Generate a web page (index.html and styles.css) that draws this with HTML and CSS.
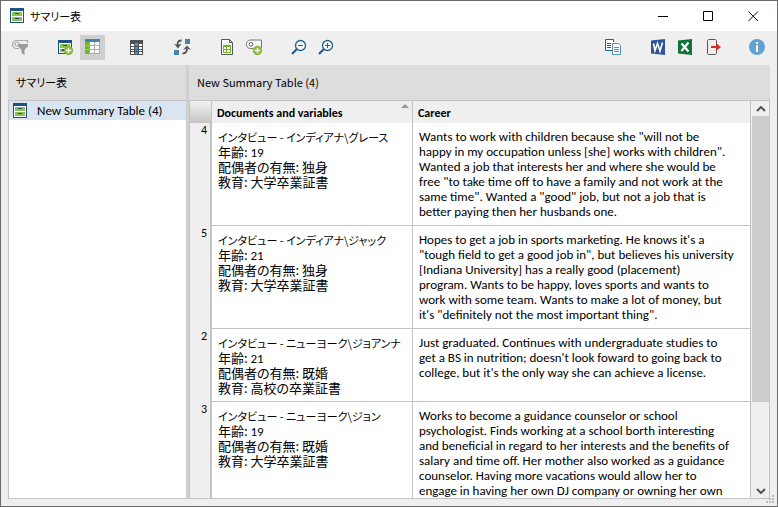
FILE: index.html
```html
<!DOCTYPE html>
<html lang="ja">
<head>
<meta charset="utf-8">
<title>サマリー表</title>
<link rel="stylesheet" href="styles.css">
</head>
<body>
<svg class="defs" aria-hidden="true">
  <symbol id="cabinet" viewBox="0 0 16 16">
    <path fill="#fff" d="M1 2h14v13H1z"/>
    <path fill="#1c5180" d="M1 0h14v3H1zM1 3h1v12H1zM14 3h1v12h-1zM1 14h14v1H1z"/>
    <path fill="#8fbf52" d="M3 4h10v4H3zM3 9h10v4H3z"/>
    <path fill="#1c5180" d="M6 5h4v1H6zM6 10h4v1H6z"/>
  </symbol>
</svg>
<div class="window">
  <header class="titlebar">
    <svg class="app-icon" aria-hidden="true"><use href="#cabinet"/></svg>
    <h1 class="caption">サマリー表</h1>
    <div class="controls">
      <button type="button" aria-label="最小化"><svg viewBox="0 0 11 11"><path d="M0 5.500h10"/></svg></button>
      <button type="button" aria-label="最大化"><svg viewBox="0 0 11 11"><path d="M.5.5h9v9h-9z"/></svg></button>
      <button type="button" aria-label="閉じる"><svg viewBox="0 0 11 11"><path d="M.5.5l9.500 9.500M10 .5l-9.500 9.500"/></svg></button>
    </div>
  </header>

  <div class="toolbar" role="toolbar">
    <div class="group">
      <button type="button" aria-label="フィルター"><svg viewBox="0 0 25 25"><path fill="none" stroke="#aaa" stroke-width="1.200" d="M19.500 8V5.500H8.500a4 4 0 0 0 0 8H11M12 11H9a2 2 0 1 1 2-2"/><path fill="#999" d="M10 9h10v2l-3.500 4v5l-3-2v-3L10 11z"/></svg></button>
    </div>
    <div class="group">
      <button type="button" aria-label="新規サマリー表"><svg viewBox="0 0 25 25"><path fill="#fff" d="M5 6h14v13H5z"/><path fill="#1c5180" d="M5 5h14v3H5zM5 8h1v11H5zM18 8h1v5h-1zM5 18h8v1H5z"/><path fill="#8fbf52" d="M7 9h10v4H7zM7 14h7v3H7z"/><path fill="#1c5180" d="M10 10h4v1h-4zM9 14h3v2H9z"/><circle cx="15.500" cy="15.500" r="4.700" fill="#8ab63a"/><path stroke="#fff" stroke-width="1.400" d="M12.700 15.500h5.600M15.500 12.700v5.600"/></svg></button>
      <button type="button" class="active" aria-label="一覧を表示" aria-pressed="true"><svg viewBox="0 0 25 25"><path fill="#aaa" d="M5 4h15v15H5z"/><path fill="#4682b0" d="M5 4h15v3H5z"/><path fill="#72b626" d="M5 7h4v12H5z"/><path fill="#fff" d="M10 7h4v3h-4zM15 7h4v3h-4zM10 11h4v3h-4zM15 11h4v3h-4zM10 15h4v3h-4zM15 15h4v3h-4z"/><path stroke="#94c95e" d="M5 10.500h4M5 14.500h4"/></svg></button>
    </div>
    <div class="group">
      <button type="button" aria-label="列"><svg viewBox="0 0 25 25"><path fill="#505050" d="M5 5h13v15H5z"/><path fill="#fff" d="M6 9h3v2H6zM6 12h3v2H6zM6 15h3v1H6zM6 17h3v2H6zM14 9h3v2h-3zM14 12h3v2h-3zM14 15h3v1h-3zM14 17h3v2h-3z"/><path fill="#4f91c5" d="M10 8h3v3h-3zM10 12h3v2h-3zM10 15h3v1h-3zM10 17h3v2h-3z"/></svg></button>
    </div>
    <div class="group">
      <button type="button" aria-label="行と列を入れ替え"><svg viewBox="0 0 25 25"><path fill="#4682b0" d="M15 4h5v5h-5zM4 15h5v5H4z"/><path fill="none" stroke="#505050" stroke-width="1.800" d="M11.500 5.500C8 5.500 7.500 7 7.500 10M12.500 18.500c3.500 0 4.500-1.500 4.500-5"/><path fill="#505050" d="M4 8.500l3.500 1.500 4-1.500-3.500 5zM13 15l4-4.500 4 4.500-4-1.500z"/></svg></button>
    </div>
    <div class="group">
      <button type="button" aria-label="シートとして表示"><svg viewBox="0 0 25 25"><path fill="#fff" stroke="#555" d="M6.500 4.500h8l3 3v12h-11z"/><path fill="none" stroke="#555" d="M14.500 4.500v3h3"/><path fill="#72b626" d="M8 10h8v8H8z"/><path fill="#fff" d="M9 12h2v2H9zM12 12h3v2h-3zM9 15h2v2H9zM12 15h3v2h-3z"/></svg></button>
      <button type="button" aria-label="コードを追加"><svg viewBox="0 0 25 25"><path fill="#f5f5f5" stroke="#777" d="M11 13.500H8.500a4 4 0 0 1 0-8.500h11v8"/><circle cx="9" cy="9.300" r="1.800" fill="#fff" stroke="#666"/><circle cx="15.500" cy="15.500" r="4.700" fill="#8ab63a"/><path stroke="#fff" stroke-width="1.400" d="M12.700 15.500h5.600M15.500 12.700v5.600"/></svg></button>
    </div>
    <div class="group">
      <button type="button" aria-label="縮小"><svg viewBox="0 0 25 25"><circle cx="13.500" cy="10.500" r="5" fill="#f6f9fc" stroke="#245d8f" stroke-width="1.300"/><path stroke="#245d8f" stroke-width="2.200" d="M9.700 14.300L5 19"/><path stroke="#245d8f" d="M11 10.500h5"/></svg></button>
      <button type="button" aria-label="拡大"><svg viewBox="0 0 25 25"><circle cx="13.500" cy="10.500" r="5" fill="#f6f9fc" stroke="#245d8f" stroke-width="1.300"/><path stroke="#245d8f" stroke-width="2.200" d="M9.700 14.300L5 19"/><path stroke="#245d8f" d="M11 10.500h5M13.500 8v5"/></svg></button>
    </div>
    <div class="group push">
      <button type="button" aria-label="コピー"><svg viewBox="0 0 25 25"><path fill="#fff" stroke="#245d8f" d="M12 15.500H4.500v-11h8V7"/><path stroke="#245d8f" d="M6 8.500h4M6 10.500h4M6 12.500h4"/><path fill="#fff" stroke="#4f91c5" d="M11.500 8.500h6l2 2v9h-8z"/><path stroke="#4f91c5" d="M13 12.500h5M13 14.500h5M13 16.500h5"/></svg></button>
    </div>
    <div class="group">
      <button type="button" aria-label="Word でエクスポート"><svg viewBox="0 0 25 25"><path fill="#2b579a" d="M5 5.500L19 4v16L5 18.500z"/><path fill="none" stroke="#fff" stroke-width="1.600" d="M7.500 8.500l1.500 7 2.500-7 2.500 7.500 2.500-8.500"/></svg></button>
      <button type="button" aria-label="Excel でエクスポート"><svg viewBox="0 0 25 25"><path fill="#107338" d="M5 5.500L19 4v16L5 18.500z"/><path fill="none" stroke="#fff" stroke-width="2.200" d="M8.500 8.500l7 8M15.500 7.500l-7 8.500"/></svg></button>
      <button type="button" aria-label="エクスポート"><svg viewBox="0 0 25 25"><path fill="none" stroke="#555" d="M16.500 9V5.500l-1-1h-7l-1 1v13l1 1h7l1-1V15"/><path fill="#d32f24" d="M11 11h5V8l5 4-5 4v-3h-5z"/></svg></button>
    </div>
    <div class="group">
      <button type="button" aria-label="情報"><svg viewBox="0 0 25 25"><circle cx="12" cy="12" r="8" fill="#64a1d3"/><path fill="#fff" d="M11 7h2v2h-2zM11 10h2v7h-2z"/></svg></button>
    </div>
  </div>

  <main class="panes">
    <section class="sidebar">
      <h2 class="pane-title">サマリー表</h2>
      <ul class="list">
        <li><a href="#table"><svg class="list-icon" aria-hidden="true"><use href="#cabinet"/></svg>New Summary Table (4)</a></li>
      </ul>
    </section>
    <section class="content">
      <h2 class="pane-title">New Summary Table (4)</h2>
      <div class="viewport">
        <div class="scroller">
          <table id="table">
            <thead>
              <tr><td class="corner"></td><th scope="col" class="doc sorted">Documents and variables</th><th scope="col">Career</th></tr>
            </thead>
            <tbody>
              <tr><th scope="row">4</th>
                <td class="ja"><span class="name">インタビュー - インディアナ\グレース</span><br>年齢: <b>19</b><br>配偶者の有無: 独身<br>教育: 大学卒業証書</td>
                <td>Wants to work with children because she "will not be<br>happy in my occupation unless [she] works with children".<br>Wanted a job that interests her and where she would be<br>free "to take time off to have a family and not work at the<br>same time". Wanted a "good" job, but not a job that is<br>better paying then her husbands one.</td></tr>
              <tr><th scope="row">5</th>
                <td class="ja"><span class="name">インタビュー - インディアナ\ジャック</span><br>年齢: <b>21</b><br>配偶者の有無: 独身<br>教育: 大学卒業証書</td>
                <td>Hopes to get a job in sports marketing. He knows it's a<br>"tough field to get a good job in", but believes his university<br>[Indiana University] has a really good (placement)<br>program. Wants to be happy, loves sports and wants to<br>work with some team. Wants to make a lot of money, but<br>it's "definitely not the most important thing".</td></tr>
              <tr><th scope="row">2</th>
                <td class="ja"><span class="name">インタビュー - ニューヨーク\ジョアンナ</span><br>年齢: <b>21</b><br>配偶者の有無: 既婚<br>教育: 高校の卒業証書</td>
                <td>Just graduated. Continues with undergraduate studies to<br>get a BS in nutrition; doesn't look foward to going back to<br>college, but it's the only way she can achieve a license.</td></tr>
              <tr><th scope="row">3</th>
                <td class="ja"><span class="name">インタビュー - ニューヨーク\ジョン</span><br>年齢: <b>19</b><br>配偶者の有無: 既婚<br>教育: 大学卒業証書</td>
                <td>Works to become a guidance counselor or school<br>psychologist. Finds working at a school borth interesting<br>and beneficial in regard to her interests and the benefits of<br>salary and time off. Her mother also worked as a guidance<br>counselor. Having more vacations would allow her to<br>engage in having her own DJ company or owning her own</td></tr>
            </tbody>
          </table>
        </div>
        <div class="scrollbar">
          <button type="button" aria-label="上へ"><svg viewBox="0 0 10 6"><path d="M1 5l4-4 4 4"/></svg></button>
          <div class="track"><div class="thumb"></div></div>
          <button type="button" aria-label="下へ"><svg viewBox="0 0 10 6"><path d="M1 1l4 4 4-4"/></svg></button>
        </div>
      </div>
    </section>
  </main>
  <svg class="grip" viewBox="0 0 8 8" aria-hidden="true"><path fill="#bbb" d="M6 0h2v2H6zM3 3h2v2H3zM6 3h2v2H6zM0 6h2v2H0zM3 6h2v2H3zM6 6h2v2H6z"/></svg>
</div>
</body>
</html>
```
FILE: styles.css
```css
* { box-sizing: border-box; }

body {
  margin: 0;
  font-family: Calibri, Carlito, Lato, "Noto Sans CJK JP", sans-serif;
  font-size: 13px;
  line-height: 15px;
  color: #000;
}

button {
  display: flex;
  align-items: center;
  justify-content: center;
  padding: 0;
  border: 0;
  background: transparent;
}

h1, h2, ul { margin: 0; padding: 0; font-weight: 400; }

.defs { display: none; }

.window {
  position: relative;
  display: flex;
  flex-direction: column;
  height: 100vh;
  border: 1px solid #6c6a6c;
  background: #efefef;
  overflow: hidden;
}

/* Title bar */
.titlebar {
  display: flex;
  flex: none;
  align-items: center;
  height: 30px;
  padding: 0 1px 0 8px;
  background: #fff;
}
.app-icon, .list-icon { flex: none; width: 16px; height: 16px; }
.caption {
  margin-left: 5px;
  font-family: "Noto Sans CJK JP", sans-serif;
  font-size: 11px;
  font-feature-settings: "palt";
}
.controls { display: flex; height: 100%; margin-left: auto; }
.controls button { width: 45px; }
.controls svg {
  width: 11px;
  height: 11px;
  fill: none;
  stroke: #000;
}

/* Toolbar */
.toolbar {
  display: flex;
  flex: none;
  gap: 20px;
  height: 34px;
  padding: 4px 7px 5px;
}
.group { display: flex; gap: 2px; }
.group button { width: 25px; height: 25px; }
.group svg { width: 25px; height: 25px; }
.push { margin-left: auto; }
.active { background: #d0d0d0; }

/* Panes */
.panes {
  display: flex;
  flex: 1;
  min-height: 0;
  margin: 0 7px 7px;
}
.sidebar {
  display: flex;
  flex: none;
  flex-direction: column;
  width: 181px;
  border-right: 3px solid #d0d0d0;
}
.content {
  display: flex;
  flex: 1;
  flex-direction: column;
  min-width: 0;
}
.pane-title {
  flex: none;
  height: 35px;
  padding: 0 8px;
  background: #ddd;
  font-family: "Noto Sans CJK JP", sans-serif;
  font-size: 11px;
  line-height: 35px;
  font-feature-settings: "palt";
}
.list {
  flex: 1;
  border: 1px solid #c3c3c3;
  border-right: 0;
  background: #fff;
  list-style: none;
}
.list a {
  display: flex;
  align-items: center;
  gap: 9px;
  height: 19px;
  padding-left: 3px;
  background: #d9e5f1;
  color: #000;
  text-decoration: none;
}

/* Table */
.viewport {
  display: flex;
  flex: 1;
  min-height: 0;
  border: 1px solid #c3c3c3;
}
.scroller {
  flex: 1;
  min-width: 0;
  overflow: hidden;
  background: #fff;
}
table {
  width: 100%;
  table-layout: fixed;
  border-collapse: separate;
  border-spacing: 0;
}
thead th, .corner {
  height: 22px;
  padding: 2px 5px 0;
  background: #efefef;
  border-right: 1px solid #c3c3c3;
  font-size: 12px;
  font-weight: 700;
  text-align: left;
}
.corner {
  width: 22px;
  background: linear-gradient(#f2f2f2, #c4c4c4);
}
.doc { position: relative; width: 201px; }
.sorted::after {
  position: absolute;
  top: 3px;
  right: 3px;
  border: 4px solid transparent;
  border-top: 0;
  border-bottom-color: #999;
  content: "";
}
tbody td {
  padding: 6px;
  border-right: 1px solid #c3c3c3;
  border-bottom: 1px solid #c3c3c3;
  vertical-align: top;
  white-space: nowrap;
}
tbody th {
  padding: 0 3px;
  border-right: 2px solid #c3c3c3;
  background: #efefef;
  font-size: 12px;
  font-weight: 400;
  text-align: right;
  vertical-align: top;
}
.ja {
  font-family: "Noto Sans CJK JP", sans-serif;
  font-feature-settings: "palt";
}
.name { font-size: 11px; line-height: 1px; }
.ja b {
  font-family: Calibri, Carlito, Lato, sans-serif;
  font-weight: 400;
  line-height: 1px;
}

/* Scroll bar */
.scrollbar {
  display: flex;
  flex: none;
  flex-direction: column;
  width: 18px;
  padding-left: 1px;
}
.scrollbar button { height: 15px; }
.scrollbar svg {
  width: 10px;
  height: 6px;
  fill: none;
  stroke: #555;
  stroke-width: 2;
}
.track { flex: 1; }
.thumb { height: 78%; background: #cdcdcd; }

.grip {
  position: absolute;
  right: 3px;
  bottom: 3px;
  width: 8px;
  height: 8px;
}
```
